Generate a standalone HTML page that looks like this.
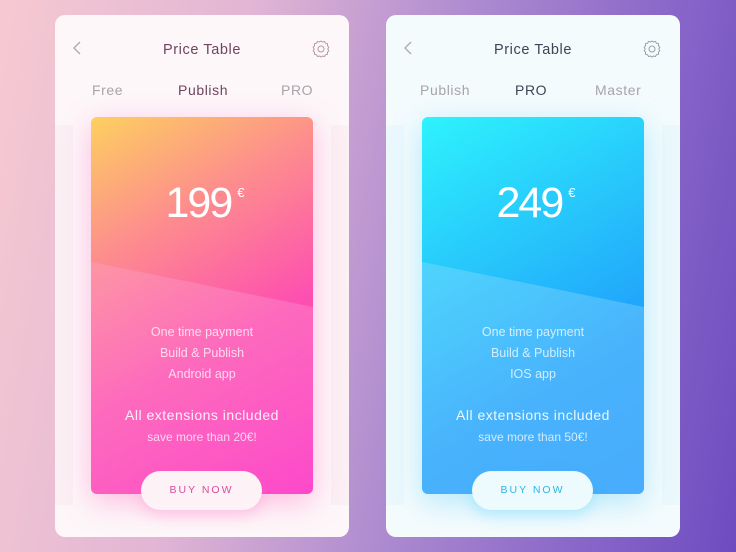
<!DOCTYPE html>
<html><head><style>
*{margin:0;padding:0;box-sizing:border-box}
body{width:736px;height:552px;overflow:hidden;position:relative;font-family:"Liberation Sans",sans-serif;
background:linear-gradient(100deg,#f6c9d2 0%,#e2b6d4 30%,#b18ed0 55%,#8a68c9 80%,#6e4cc0 100%)}
.ph{position:absolute;top:15px;width:294px;height:522px;border-radius:10px;overflow:hidden}
.l{left:55px;background:#fdf7f9}
.r{left:386px;background:#f4fbfd}
.side{position:absolute;top:110px;width:18px;height:380px}
.l .side{background:#fbf0f4}.r .side{background:#ebf8fc}
.title{position:absolute;top:27px;left:0;width:100%;text-align:center;font-size:14.5px;letter-spacing:.6px}
.l .title{color:#6e4560}.r .title{color:#3e4555}
.back{position:absolute;left:17px;top:26px;}
.gear{position:absolute;right:18px;top:24px}
.tabs{position:absolute;top:67px;font-size:14px;letter-spacing:.6px;color:#a9a3aa}
.card{position:absolute;left:36px;top:102px;width:222px;height:377px;border-radius:6px;overflow:hidden;text-align:center;color:#fff}
.l .card{background:linear-gradient(150deg,#fdd060 0%,#fd8f8c 28%,#fd50b0 60%,#fd20c4 100%);box-shadow:0 8px 30px rgba(255,80,180,.35)}
.r .card{background:linear-gradient(150deg,#2ef3fd 0%,#27c7fb 35%,#1f9cfb 70%,#1f95fb 100%);box-shadow:0 8px 30px rgba(60,200,250,.35)}
.ov{position:absolute;left:0;top:0;width:222px;height:377px}
.price{position:absolute;top:62px;width:100%;font-size:43px;font-weight:300;letter-spacing:-2px;padding-left:4px}
.price sup{font-size:13px;vertical-align:top;position:relative;top:6px;margin-left:6px}
.f{position:absolute;width:100%;font-size:12.5px;opacity:.75}
.btn{position:absolute;top:456px;left:86px;width:121px;height:39px;border-radius:20px;background:#fdf3f7;font-size:10.5px;letter-spacing:2px;text-align:center;line-height:39px}
.l .btn{color:#d84c9c;box-shadow:0 6px 14px rgba(255,100,190,.25)}
.r .btn{left:86px;background:#eefbfe;color:#2cb7e6;box-shadow:0 6px 14px rgba(40,200,250,.25)}
</style></head><body>
<div class="ph l">
 <div class="side" style="left:0"></div><div class="side" style="right:0"></div>
 <svg class="back" width="10" height="14"><path d="M8 1L2 7l6 6" stroke="#aaa" stroke-width="1.3" fill="none"/></svg>
 <div class="title">Price Table</div>
 <svg class="gear" width="20" height="20" viewBox="0 0 20 20"><path d="M10 2l1.5 1 2-.5 1 1.7 2 .6v2l1.3 1.4-1 1.8 1 1.8-1.3 1.4v2l-2 .6-1 1.7-2-.5L10 18l-1.5-1-2 .5-1-1.7-2-.6v-2L2.2 11.8l1-1.8-1-1.8 1.3-1.4v-2l2-.6 1-1.7 2 .5z" stroke="#b59aab" stroke-width="1" fill="none"/><circle cx="10" cy="10" r="3" stroke="#b59aab" fill="none"/></svg>
 <div class="tabs" style="left:37px">Free</div>
 <div class="tabs" style="left:123px;color:#6e4560">Publish</div>
 <div class="tabs" style="left:226px">PRO</div>
 <div class="card">
  <svg class="ov"><polygon points="0,145 222,190 222,377 0,377" fill="rgba(255,170,220,.3)"/></svg>
  <div class="price">199<sup>€</sup></div>
  <div class="f" style="top:208px">One time payment</div>
  <div class="f" style="top:229px">Build &amp; Publish</div>
  <div class="f" style="top:250px">Android app</div>
  <div class="f" style="top:290px;font-size:14px;opacity:.9;letter-spacing:.5px">All extensions included</div>
  <div class="f" style="top:313px;font-size:12px">save more than 20€!</div>
 </div>
 <div class="btn">BUY NOW</div>
</div>
<div class="ph r">
 <div class="side" style="left:0"></div><div class="side" style="right:0"></div>
 <svg class="back" width="10" height="14"><path d="M8 1L2 7l6 6" stroke="#aaa" stroke-width="1.3" fill="none"/></svg>
 <div class="title">Price Table</div>
 <svg class="gear" width="20" height="20" viewBox="0 0 20 20"><path d="M10 2l1.5 1 2-.5 1 1.7 2 .6v2l1.3 1.4-1 1.8 1 1.8-1.3 1.4v2l-2 .6-1 1.7-2-.5L10 18l-1.5-1-2 .5-1-1.7-2-.6v-2L2.2 11.8l1-1.8-1-1.8 1.3-1.4v-2l2-.6 1-1.7 2 .5z" stroke="#9aa0aa" stroke-width="1" fill="none"/><circle cx="10" cy="10" r="3" stroke="#9aa0aa" fill="none"/></svg>
 <div class="tabs" style="left:34px">Publish</div>
 <div class="tabs" style="left:129px;color:#3e4555">PRO</div>
 <div class="tabs" style="left:209px">Master</div>
 <div class="card">
  <svg class="ov"><polygon points="0,145 222,190 222,377 0,377" fill="rgba(170,230,255,.3)"/></svg>
  <div class="price">249<sup>€</sup></div>
  <div class="f" style="top:208px">One time payment</div>
  <div class="f" style="top:229px">Build &amp; Publish</div>
  <div class="f" style="top:250px">IOS app</div>
  <div class="f" style="top:290px;font-size:14px;opacity:.9;letter-spacing:.5px">All extensions included</div>
  <div class="f" style="top:313px;font-size:12px">save more than 50€!</div>
 </div>
 <div class="btn">BUY NOW</div>
</div>
</body></html>
